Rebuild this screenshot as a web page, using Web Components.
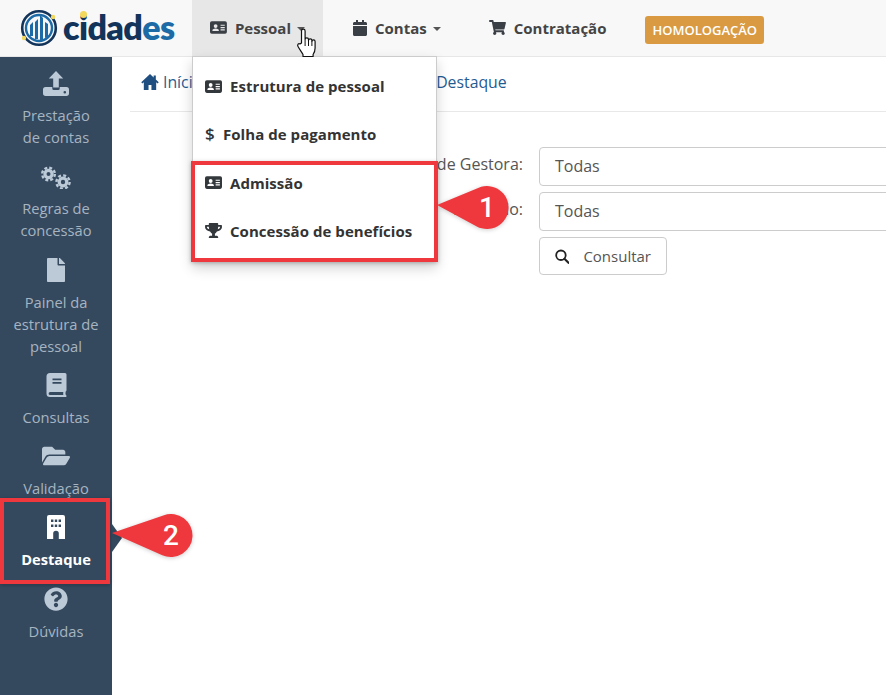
<!DOCTYPE html>
<html lang="pt-BR">
<head>
<meta charset="utf-8">
<title>Cidades</title>
<style>
  html, body { margin: 0; height: 100%; overflow: hidden; background: #fff; }
  body { font-family: "Open Sans", sans-serif; color: #333; }
</style>
</head>
<body>
<app-shell>
  <top-bar slot="top">
    <nav-item icon="idcard" active caret>Pessoal</nav-item>
    <nav-item icon="calendar" caret>Contas</nav-item>
    <nav-item icon="cart">Contratação</nav-item>
    <env-badge>HOMOLOGAÇÃO</env-badge>
  </top-bar>
  <side-bar slot="side">
    <side-item icon="upload">Prestação<br>de contas</side-item>
    <side-item icon="cogs">Regras de<br>concessão</side-item>
    <side-item icon="file">Painel da<br>estrutura de<br>pessoal</side-item>
    <side-item icon="book">Consultas</side-item>
    <side-item icon="folder">Validação</side-item>
    <side-item icon="building" active>Destaque</side-item>
    <side-item icon="question">Dúvidas</side-item>
  </side-bar>
  <main-area>
    <bread-crumb></bread-crumb>
    <filter-form></filter-form>
  </main-area>
  <drop-menu slot="over">
    <menu-row icon="idcard">Estrutura de pessoal</menu-row>
    <menu-row icon="dollar">Folha de pagamento</menu-row>
    <menu-row icon="idcard">Admissão</menu-row>
    <menu-row icon="trophy">Concessão de benefícios</menu-row>
  </drop-menu>
  <mark-box slot="over" style="left:191px;top:161px;width:247px;height:101px"></mark-box>
  <mark-box slot="over" style="left:0;top:498px;width:110px;height:86px"></mark-box>
  <call-out slot="over" reach="50" style="left:437px;top:186px">1</call-out>
  <call-out slot="over" reach="59" style="left:112px;top:514px">2</call-out>
  <hand-cursor slot="over"></hand-cursor>
</app-shell>

<script>
const ICONS = {
  idcard: `<svg viewBox="0 0 24 18"><path fill-rule="evenodd" d="M2.500 0h19A2.500 2.500 0 0 1 24 2.500v13a2.500 2.500 0 0 1-2.500 2.500h-19A2.500 2.500 0 0 1 0 15.500v-13A2.500 2.500 0 0 1 2.500 0zM8 4.200a2.700 2.700 0 1 0 0 5.400 2.700 2.700 0 0 0 0-5.400zM3.400 13.800h9.200c.3-2-1.600-3.300-4.600-3.300s-4.900 1.300-4.600 3.300zM15 5v1.600h6V5zm0 3.300v1.600h6V8.300zm0 3.300v1.600h6v-1.600z"/></svg>`,
  calendar: `<svg viewBox="0 0 448 512"><path d="M12 192h424c6.600 0 12 5.400 12 12v260c0 26.500-21.500 48-48 48H48c-26.500 0-48-21.500-48-48V204c0-6.600 5.400-12 12-12zm436-44v-36c0-26.500-21.500-48-48-48h-48V12c0-6.600-5.400-12-12-12h-40c-6.600 0-12 5.400-12 12v52H160V12c0-6.600-5.400-12-12-12h-40c-6.600 0-12 5.400-12 12v52H48C21.500 64 0 85.500 0 112v36c0 6.600 5.400 12 12 12h424c6.600 0 12-5.400 12-12z"/></svg>`,
  cart: `<svg viewBox="0 0 576 512"><path d="M528.120 301.319l47.273-208C578.806 78.301 567.391 64 551.990 64H159.208l-9.166-44.810C147.758 8.021 137.930 0 126.529 0H24C10.745 0 0 10.745 0 24v16c0 13.255 10.745 24 24 24h69.883l70.248 343.435C147.325 417.100 136 435.222 136 456c0 30.928 25.072 56 56 56s56-25.072 56-56c0-15.674-6.447-29.835-16.824-40h209.647C430.447 426.165 424 440.326 424 456c0 30.928 25.072 56 56 56s56-25.072 56-56c0-22.172-12.888-41.332-31.579-50.405l5.517-24.276c3.413-15.018-8.002-29.319-23.403-29.319H218.117l-6.545-32h293.145c11.206 0 20.920-7.754 23.403-18.681z"/></svg>`,
  upload: `<svg viewBox="0 0 26 26"><path d="M13 1 5.800 8.600h4.400v9h5.600v-9h4.400z"/><path d="M2.500 17H9.300v1.500a1.500 1.500 0 0 0 1.500 1.500h4.400a1.500 1.500 0 0 0 1.500-1.500V17h6.800A2.500 2.500 0 0 1 26 19.500v3.800a2.700 2.700 0 0 1-2.700 2.700H2.700A2.700 2.700 0 0 1 0 23.300v-3.800A2.500 2.500 0 0 1 2.500 17zM21.800 21a1.300 1.300 0 1 0 0 2.600 1.300 1.300 0 0 0 0-2.600z" fill-rule="evenodd"/></svg>`,
  cogs: `<svg viewBox="0 0 30 26"><g fill="none" stroke="currentColor"><circle cx="7.500" cy="11" r="3.600" stroke-width="3.200"/><circle cx="7.500" cy="11" r="6.300" stroke-width="2.400" stroke-dasharray="2.900 2.050"/><circle cx="22" cy="19" r="3.800" stroke-width="3.200"/><circle cx="22" cy="19" r="6.600" stroke-width="2.400" stroke-dasharray="3 2.180"/></g></svg>`,
  file: `<svg viewBox="0 0 384 512"><path d="M224 136V0H24C10.700 0 0 10.700 0 24v464c0 13.300 10.700 24 24 24h336c13.300 0 24-10.700 24-24V160H248c-13.200 0-24-10.800-24-24zm160-14.100v6.100H256V0h6.100c6.400 0 12.500 2.500 17 7l97.900 98c4.500 4.500 7 10.600 7 16.900z"/></svg>`,
  book: `<svg viewBox="0 0 20 24"><path fill-rule="evenodd" d="M3.500 0H18.500A1.500 1.500 0 0 1 20 1.500v15.800c0 .6-.3 1-.8 1.300-.3 1-.3 2.300 0 3.200.5.300.8.700.8 1.200v.3c0 .4-.3.700-.7.700H3.500A3.500 3.500 0 0 1 0 20.500v-17A3.500 3.500 0 0 1 3.500 0zM6 5.500v1.700h9V5.500zm0 3.600v1.700h9V9.100zM3.600 19a1.500 1.500 0 0 0 0 3H16.800a11 11 0 0 1 0-3z"/></svg>`,
  folder: `<svg viewBox="0 0 576 512"><path d="M572.694 292.093L500.270 416.248A63.997 63.997 0 0 1 444.989 448H45.025c-18.523 0-30.064-20.093-20.731-36.093l72.424-124.155A64 64 0 0 1 152 256h399.964c18.523 0 30.064 20.093 20.730 36.093zM152 224h328v-48c0-26.510-21.490-48-48-48H272l-64-64H48C21.490 64 0 85.490 0 112v278.046l69.077-118.418C86.214 242.250 117.989 224 152 224z"/></svg>`,
  building: `<svg viewBox="0 0 18 24"><path fill-rule="evenodd" d="M2 0H16a2 2 0 0 1 2 2V24H11.800V18.500a2.800 2.800 0 0 0-5.600 0V24H0V2a2 2 0 0 1 2-2zM4 4.500v2.400h2.400V4.500zm3.800 0v2.400h2.400V4.500zm3.800 0v2.400H14V4.500zM4 9.500v2.400h2.400V9.500zm3.800 0v2.400h2.400V9.500zm3.800 0v2.400H14V9.500z"/></svg>`,
  question: `<svg viewBox="0 0 512 512"><path d="M504 256c0 136.997-111.043 248-248 248S8 392.997 8 256C8 119.083 119.043 8 256 8s248 111.083 248 248zM262.655 90c-54.497 0-89.255 22.957-116.549 63.758-3.536 5.286-2.353 12.415 2.715 16.258l34.699 26.310c5.205 3.947 12.621 3.008 16.665-2.122 17.864-22.658 30.113-35.797 57.303-35.797 20.429 0 45.698 13.148 45.698 32.958 0 14.976-12.363 22.667-32.534 33.976C247.128 238.528 216 254.941 216 296v4c0 6.627 5.373 12 12 12h56c6.627 0 12-5.373 12-12v-1.333c0-28.462 83.186-29.647 83.186-106.667 0-58.002-60.165-102-116.531-102zM256 338c-25.365 0-46 20.635-46 46 0 25.364 20.635 46 46 46s46-20.636 46-46c0-25.365-20.635-46-46-46z"/></svg>`,
  trophy: `<svg viewBox="0 0 576 512"><path d="M552 64H448V24c0-13.300-10.700-24-24-24H152c-13.300 0-24 10.700-24 24v40H24C10.700 64 0 74.700 0 88v56c0 35.700 22.500 72.400 61.900 100.700 31.500 22.700 69.800 37.100 110 41.700C203.300 338.500 240 360 240 360v72h-48c-35.300 0-64 20.700-64 56v12c0 6.600 5.400 12 12 12h296c6.600 0 12-5.400 12-12v-12c0-35.300-28.700-56-64-56h-48v-72s36.700-21.500 68.100-73.600c40.300-4.600 78.700-19 110-41.700 39.300-28.300 61.900-65 61.900-100.700V88c0-13.300-10.700-24-24-24zM99.300 192.800C74.900 175.200 64 155.600 64 144v-16h64.200c1 32.600 5.800 61.200 12.800 86.200-15.100-5.200-29.200-12.400-41.700-21.400zM512 144c0 16.100-17.700 36.100-35.300 48.800-12.500 9-26.700 16.200-41.800 21.400 7-25 11.800-53.600 12.800-86.200H512v16z"/></svg>`,
  home: `<svg viewBox="0 0 24 22"><path d="M12 0 0 11.500l1.500 1.500L3.500 11.200V22h6.500v-7h4v7h6.500V11.200l2 1.800L24 11.500 20 7.700V2h-3v2.900z"/></svg>`,
  search: `<svg viewBox="0 0 16 16"><circle cx="6.600" cy="6.600" r="5.300" fill="none" stroke="currentColor" stroke-width="2"/><path d="M10.500 10.500 15 15" fill="none" stroke="currentColor" stroke-width="2.400" stroke-linecap="round"/></svg>`
};

class UiIcon extends HTMLElement {
  constructor() {
    super();
    this.attachShadow({ mode: "open" });
  }

  connectedCallback() {
    this.shadowRoot.innerHTML = `
    <style>
      :host { display: inline-flex; align-items: center; justify-content: center; }
      svg { display: block; width: 100%; height: 100%; fill: currentColor; }
    </style>
    ${ICONS[this.getAttribute("name")] || ""}`;
  }
}

class AppShell extends HTMLElement {
  constructor() {
    super();
    this.attachShadow({ mode: "open" }).innerHTML = `
    <style>
      :host { display: grid; grid-template-columns: 112px 1fr; grid-template-rows: 57px 1fr; height: 695px; width: 886px; position: relative; overflow: hidden; }
      .top { grid-column: 1 / -1; display: block; }
    </style>
    <div class="top"><slot name="top"></slot></div>
    <slot name="side"></slot>
    <slot></slot>
    <slot name="over"></slot>`;
  }
}

class TopBar extends HTMLElement {
  constructor() {
    super();
    this.attachShadow({ mode: "open" }).innerHTML = `
    <style>
      :host { display: flex; height: 56px; background: #f8f8f8; border-bottom: 1px solid #e7e7e7; }
      .brand { width: 192px; flex: none; display: flex; align-items: center; position: relative; padding-left: 20px; box-sizing: border-box; gap: 5px; }
      .brand svg { width: 38px; height: 38px; flex: none; }
      .word { font: 800 34px/1 Lato, sans-serif; color: #12335a; letter-spacing: -.6px; position: relative; top: -1px; }
      .word b { font-weight: 800; color: #1c6aa6; }
      .dot { position: absolute; left: 80px; top: 11px; width: 7px; height: 7px; border-radius: 50%; background: #f2d85c; }
      .items { display: flex; align-items: stretch; }
    </style>
    <div class="brand">
      <svg viewBox="0 0 38 38">
        <circle cx="19" cy="19" r="16.800" fill="none" stroke="#12335a" stroke-width="2.600"/>
        <circle cx="19" cy="19" r="13" fill="none" stroke="#1c6aa6" stroke-width="2.400"/>
        <path fill="#1c6aa6" d="M10 16l3-3v14h-3zM15 13l3-3v20h-3zM20 6l3 3v22h-3zM25 13l3 2v13l-3 1z"/>
        <circle cx="4" cy="29" r="2.200" fill="#f2d85c"/>
        <circle cx="33" cy="8" r="2.200" fill="#f2d85c"/>
      </svg>
      <span class="word">cidad<b>es</b></span>
      <span class="dot"></span>
    </div>
    <div class="items"><slot></slot></div>`;
  }
}

class NavItem extends HTMLElement {
  constructor() {
    super();
    this.attachShadow({ mode: "open" });
  }

  connectedCallback() {
    const name = this.getAttribute("icon");
    const caret = this.hasAttribute("caret") ? `<i class="caret"></i>` : "";
    this.shadowRoot.innerHTML = `
    <style>
      :host { display: flex; align-items: center; margin-left: 12px; font: 700 15px/20px "Open Sans", sans-serif; color: #444; padding: 0 18px 1px; }
      :host([active]) { background: #e7e7e7; margin-left: 0; padding-right: 18px; width: 131px; box-sizing: border-box; }
      ui-icon { height: 15px; margin-right: 8px; color: #3a3f46; }
      ui-icon[name=idcard] { width: 17px; height: 13px; }
      ui-icon[name=calendar] { width: 14px; height: 16px; }
      ui-icon[name=cart] { width: 17px; height: 15px; }
      .caret { width: 0; height: 0; margin-left: 6px; border: 4.500px solid transparent; border-top-color: #555; border-bottom-width: 0; position: relative; top: 1px; }
    </style>
    <ui-icon name="${name}"></ui-icon><span><slot></slot></span>${caret}`;
  }
}

class EnvBadge extends HTMLElement {
  constructor() {
    super();
    this.attachShadow({ mode: "open" }).innerHTML = `
    <style>
      :host { display: block; align-self: center; margin: 4px 0 0 21px; background: #d99a42; color: #fff; font: 600 13px/28px "Open Sans", sans-serif; padding: 0 7px; border-radius: 3px; height: 28px; }
    </style>
    <slot></slot>`;
  }
}

class SideBar extends HTMLElement {
  constructor() {
    super();
    this.attachShadow({ mode: "open" }).innerHTML = `
    <style>
      :host { display: flex; flex-direction: column; background: #34495e; padding-top: 1px; box-sizing: border-box; }
    </style>
    <slot></slot>`;
  }
}

class SideItem extends HTMLElement {
  constructor() {
    super();
    this.attachShadow({ mode: "open" });
  }

  connectedCallback() {
    const name = this.getAttribute("icon");
    this.shadowRoot.innerHTML = `
    <style>
      :host { display: flex; flex-direction: column; align-items: center; padding: 12px 0 3.300px; font: 400 14.700px/22px "Open Sans", sans-serif; color: #a7b4c1; text-align: center; position: relative; }
      ui-icon { width: 26px; height: 26px; margin-bottom: 8px; color: #bccad8; }
      ui-icon[name=file], ui-icon[name=building] { width: 18px; height: 24px; margin: 1px 0 9px; }
      ui-icon[name=book] { width: 21px; height: 24px; margin: 1px 0 9px; }
      ui-icon[name=question] { width: 24px; height: 24px; margin: 1px 0 9px; }
      ui-icon[name=folder] { width: 28px; }
      ui-icon[name=cogs] { width: 30px; }
      :host([active]) { color: #fff; font-weight: 700; }
      :host([active]) ui-icon { color: #fff; }
      :host([active])::after { content: ""; position: absolute; left: 100%; top: 22px; border: 14px solid transparent; border-left: 10px solid #34495e; border-right-width: 0; }
    </style>
    <ui-icon name="${name}"></ui-icon><div><slot></slot></div>`;
  }
}

class MainArea extends HTMLElement {
  constructor() {
    super();
    this.attachShadow({ mode: "open" }).innerHTML = `
    <style>
      :host { display: block; padding-left: 18px; overflow: hidden; min-width: 0; }
    </style>
    <slot></slot>`;
  }
}

class BreadCrumb extends HTMLElement {
  constructor() {
    super();
    this.attachShadow({ mode: "open" }).innerHTML = `
    <style>
      :host { display: flex; align-items: center; height: 50px; padding-bottom: 4px; border-bottom: 1px solid #e8e8e8; padding-left: 11px; font: 400 15.800px/20px "Open Sans", sans-serif; color: #1f5c92; }
      ui-icon { width: 18px; height: 16px; margin-right: 4px; color: #1f4f80; }
      .last { margin-left: 234px; }
    </style>
    <ui-icon name="home"></ui-icon><span>Início</span><span class="last">Destaque</span>`;
  }
}

class FilterForm extends HTMLElement {
  constructor() {
    super();
    this.attachShadow({ mode: "open" }).innerHTML = `
    <style>
      :host { display: grid; grid-template-columns: 393px 400px; column-gap: 16px; row-gap: 6px; padding-top: 35px; font: 400 16px/22px "Open Sans", sans-serif; color: #555; }
      label { text-align: right; padding-top: 6px; }
      .field { height: 39px; box-sizing: border-box; border: 1px solid #ccc; border-radius: 4px; padding: 0 15px 1px; display: flex; align-items: center; }
      button { grid-column: 2; justify-self: start; width: 128px; height: 38px; display: flex; align-items: center; gap: 14px; padding: 0 15px; background: #fff; border: 1px solid #ccc; border-radius: 4px; font: 400 15px/20px "Open Sans", sans-serif; color: #555; }
      ui-icon { width: 15px; height: 15px; color: #222; }
    </style>
    <label>Unidade Gestora:</label><div class="field">Todas</div>
    <label>Exercício:</label><div class="field">Todas</div>
    <button><ui-icon name="search"></ui-icon>Consultar</button>`;
  }
}

class DropMenu extends HTMLElement {
  constructor() {
    super();
    this.attachShadow({ mode: "open" }).innerHTML = `
    <style>
      :host { display: block; position: absolute; left: 192px; top: 56px; width: 245px; height: 206px; box-sizing: border-box; padding-top: 5px; background: #fff; border: 1px solid #ccc; box-shadow: 0 6px 12px rgba(0,0,0,.18); }
    </style>
    <slot></slot>`;
  }
}

class MenuRow extends HTMLElement {
  constructor() {
    super();
    this.attachShadow({ mode: "open" });
  }

  connectedCallback() {
    const name = this.getAttribute("icon");
    this.shadowRoot.innerHTML = `
    <style>
      :host { display: flex; align-items: center; height: 48.250px; padding-left: 12px; font: 700 15px/20px "Open Sans", sans-serif; color: #333; letter-spacing: .05px; }
      ui-icon { width: 17px; height: 13px; margin-right: 8px; color: #33383d; }
      ui-icon[name=trophy] { height: 15px; }
      .dollar { width: 10px; margin-right: 8px; font-size: 17px; font-weight: 600; text-align: center; }
    </style>
    ${name === "dollar" ? `<span class="dollar">$</span>` : `<ui-icon name="${name}"></ui-icon>`}<span><slot></slot></span>`;
  }
}

class MarkBox extends HTMLElement {
  constructor() {
    super();
    this.attachShadow({ mode: "open" }).innerHTML = `
    <style>
      :host { display: block; position: absolute; box-sizing: border-box; border: 4px solid #ef383d; box-shadow: 0 1px 4px rgba(0,0,0,.25); }
    </style>`;
  }
}

class CallOut extends HTMLElement {
  constructor() {
    super();
    this.attachShadow({ mode: "open" });
  }

  connectedCallback() {
    const reach = Number(this.getAttribute("reach"));
    const r = 21.5;
    const tipY = 19;
    // tangents from the tip to the circle
    const dist = Math.hypot(reach, r - tipY);
    const base = Math.atan2(r - tipY, reach);
    const spread = Math.asin(r / dist);
    const len = Math.sqrt(dist * dist - r * r);
    const ax = len * Math.cos(base - spread), ay = tipY + len * Math.sin(base - spread);
    const bx = len * Math.cos(base + spread), by = tipY + len * Math.sin(base + spread);
    this.shadowRoot.innerHTML = `
    <style>
      :host { display: block; position: absolute; width: ${reach + 24}px; height: 44px; }
      svg { position: absolute; left: 0; top: 0; filter: drop-shadow(0 1px 2px rgba(0,0,0,.2)); }
      span { position: absolute; left: ${reach - 18}px; width: 36px; top: 0; text-align: center; font: 500 28px/43px Roboto, sans-serif; color: #fff; }
    </style>
    <svg width="${reach + 24}" height="44" viewBox="0 0 ${reach + 24} 44"><path fill="#ef383d" d="M0 ${tipY} L${ax} ${ay} A${r} ${r} 0 1 1 ${bx} ${by} Z"/></svg>
    <span><slot></slot></span>`;
  }
}

class HandCursor extends HTMLElement {
  constructor() {
    super();
    this.attachShadow({ mode: "open" }).innerHTML = `
    <style>
      :host { display: block; position: absolute; left: 296px; top: 28px; width: 22px; height: 30px; }
      svg { display: block; }
    </style>
    <svg width="22" height="30" viewBox="0 0 22 30">
      <path fill="#fff" stroke="#111" stroke-width="1.200" stroke-linejoin="round" d="M5.500 15V3a1.800 1.800 0 0 1 3.600 0v8.500a1.700 1.700 0 0 1 3.400 0v1a1.700 1.700 0 0 1 3.400 0v1a1.600 1.600 0 0 1 3.200 0v6.500c0 3-1 5-2 6.500v2H7v-2c-1-2-3-4.500-5-8-1-1.800.5-3.500 2-2.500z"/>
      <path fill="none" stroke="#111" d="M9.100 12v6M12.500 12.500V18M15.900 13.500V18"/>
    </svg>`;
  }
}

customElements.define("ui-icon", UiIcon);
customElements.define("app-shell", AppShell);
customElements.define("top-bar", TopBar);
customElements.define("nav-item", NavItem);
customElements.define("env-badge", EnvBadge);
customElements.define("side-bar", SideBar);
customElements.define("side-item", SideItem);
customElements.define("main-area", MainArea);
customElements.define("bread-crumb", BreadCrumb);
customElements.define("filter-form", FilterForm);
customElements.define("drop-menu", DropMenu);
customElements.define("menu-row", MenuRow);
customElements.define("mark-box", MarkBox);
customElements.define("call-out", CallOut);
customElements.define("hand-cursor", HandCursor);
</script>
</body>
</html>
